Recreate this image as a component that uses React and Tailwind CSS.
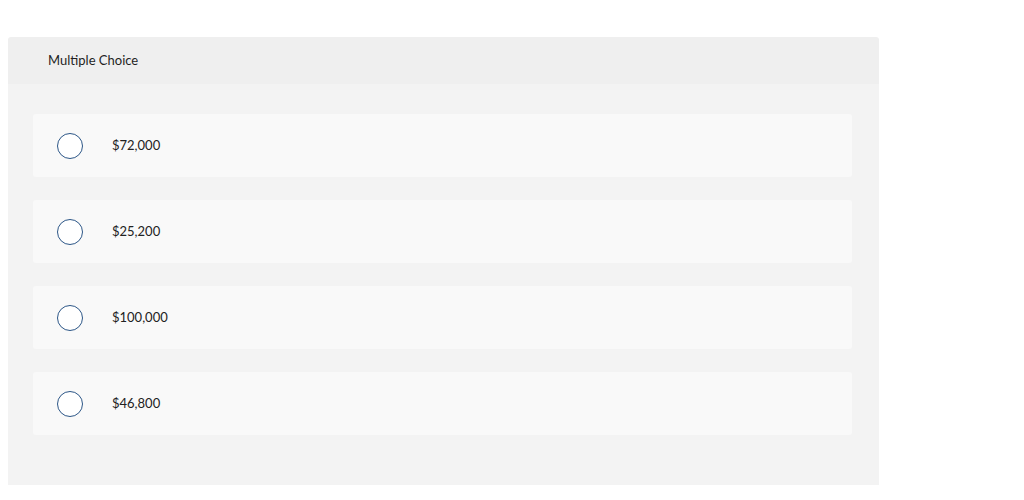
export default function App() {
  const options = ['$72,000', '$25,200', '$100,000', '$46,800'];

  return (
    <div className="min-h-[500px] bg-white pt-[37px] pl-[8px]" style={{ fontFamily: 'Lato, "Open Sans", sans-serif' }}>
      <div className="w-[871px] rounded-t-[3px] overflow-hidden">
        <div className="h-[47px] bg-[#efefef] flex items-center pl-[40px] text-[13px] text-[#1f1f1f]">
          Multiple Choice
        </div>
        <div className="bg-[#f3f3f3] pt-[30px] pb-[50px] pl-[25px] pr-[27px] flex flex-col gap-[23px]">
          {options.map(o => (
            <label key={o} className="h-[63px] bg-[#f9f9f9] rounded-[3px] flex items-center pl-[24px] cursor-pointer">
              <span className="w-[26px] h-[26px] rounded-full border border-[#2c5687] bg-white shrink-0" />
              <span className="ml-[29px] text-[13px] text-[#222]">{o}</span>
            </label>
          ))}
        </div>
      </div>
    </div>
  );
}
